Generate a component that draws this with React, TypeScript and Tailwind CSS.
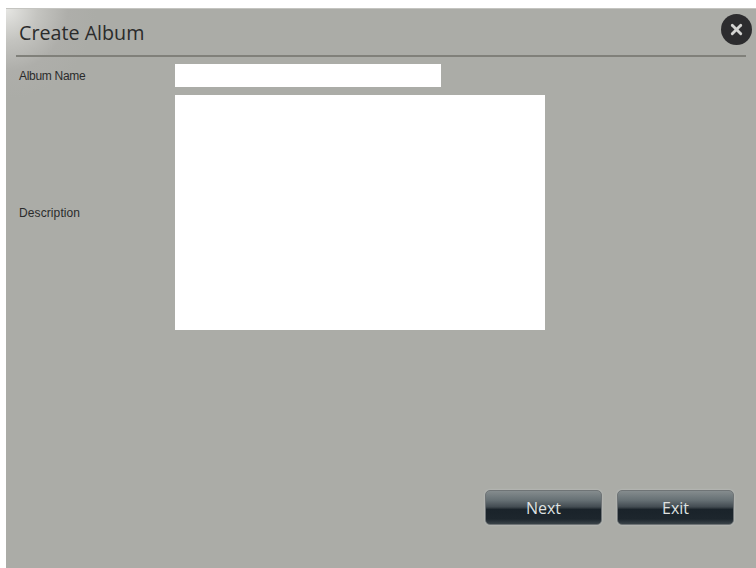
import { X } from "lucide-react";

function ActionButton({ label }: { label: string }) {
  return (
    <button className="w-[117px] h-[35px] pt-[1px] rounded-[5px] border border-[#6f7476] bg-[linear-gradient(to_bottom,#858c8e_0%,#667074_28%,#434c52_48%,#1a232a_56%,#1d262d_85%,#3a4349_100%)] text-[#dfe1e1] text-[16px] [font-family:'Open_Sans',sans-serif] shadow-[0_0_2px_#c4cac9]">
      {label}
    </button>
  );
}

export default function App() {
  return (
    <div className="w-[756px] h-[568px] bg-white pt-[8px] pl-[6px] overflow-hidden [font-family:'Open_Sans',sans-serif]">
      <div className="h-[560px] flex flex-col bg-[radial-gradient(circle_at_0px_0px,#e6e6e3_0px,#c4c4c0_32px,#aeaeaa_62px,#abaca7_90px)] border-t border-[#c4c4c0]">
        {/* Header */}
        <div className="flex items-center justify-between h-[48px] ml-[10px] mr-[10px] pl-[3px] border-b-2 border-[#80807a]">
          <h1 className="text-[19.7px] leading-none text-[#2a2b2b] mt-[1px]">Create Album</h1>
          <div className="flex items-center justify-center w-[31px] h-[31px] rounded-full bg-[#2c2c2e] -mr-[6px] -mt-[6px]">
            <X size={17} strokeWidth={4} className="text-[#d4d4d2]" />
          </div>
        </div>

        {/* Form */}
        <div className="flex items-center mt-[7px] pl-[13px] h-[23px]">
          <label className="w-[156px] text-[12px] text-[#2a2b2b] tracking-[-0.3px] [font-family:'Liberation_Sans',sans-serif]">Album Name</label>
          <input className="w-[266px] h-[23px] bg-white" />
        </div>
        <div className="flex items-center mt-[8px] pl-[13px] h-[235px]">
          <label className="w-[156px] text-[12px] text-[#2a2b2b] tracking-[0.1px] [font-family:'Liberation_Sans',sans-serif]">Description</label>
          <textarea className="w-[370px] h-[235px] bg-white resize-none" />
        </div>

        {/* Buttons */}
        <div className="flex justify-end gap-[15px] mt-[160px] pr-[22px]">
          <ActionButton label="Next" />
          <ActionButton label="Exit" />
        </div>
      </div>
    </div>
  );
}
